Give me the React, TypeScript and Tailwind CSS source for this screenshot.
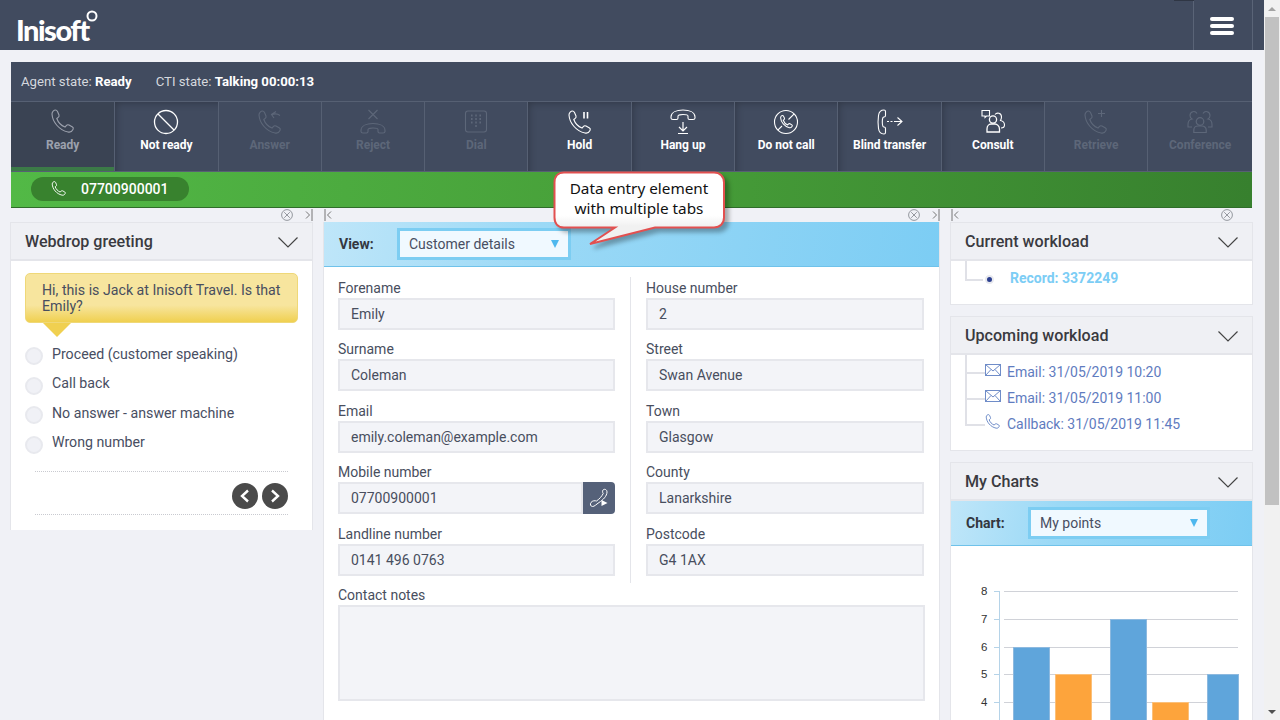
import type { ReactNode } from "react";

const Handset = () => (
  <path d="M2 5C2 2.5 4 1 5.5 1 6.5 1 7 1.5 7.5 2.5L9 6C9.3 7 9 7.8 8.2 8.4L6.8 9.5C8 13 11 16.5 15 18L16.5 16.3C17.2 15.6 18 15.5 19 16L22.5 18C23.3 18.5 23.5 19.5 23 20.5 22 22.5 20 23.5 18 23 9 21 2.5 13 2 5Z" />
);

const HungUp = () => (
  <path d="M1 8C1 3 7 1 13 1 19 1 25 3 25 8V9C25 10 24 10.5 23 10.5H19.5C18.5 10.5 18 10 18 9V7C18 6 15 5.5 13 5.5 11 5.5 8 6 8 7V9C8 10 7.5 10.5 6.5 10.5H3C2 10.5 1 10 1 9Z" />
);

const Person = ({ x = 0, y = 0 }: { x?: number; y?: number }) => (
  <g transform={`translate(${x} ${y})`}>
    <circle cx="7" cy="4.5" r="3.8" />
    <path d="M.8 15.5V13C.8 10.5 3 9 5 9H9C11 9 13.2 10.5 13.2 13V15.5Z" />
  </g>
);

const Icon = ({ children }: { children: ReactNode }) => (
  <svg viewBox="0 0 26 26" fill="none" stroke="currentColor" strokeWidth="1.1" className="w-[26px] h-[26px]">
    {children}
  </svg>
);

const buttons: { label: string; tone: "selected" | "on" | "off"; icon: ReactNode }[] = [
  { label: "Ready", tone: "selected", icon: <Handset /> },
  {
    label: "Not ready",
    tone: "on",
    icon: (
      <>
        <circle cx="13" cy="13" r="11.5" strokeWidth="1.3" />
        <path d="M5 5L21 21" strokeWidth="1.3" />
      </>
    ),
  },
  {
    label: "Answer",
    tone: "off",
    icon: (
      <>
        <g transform="translate(0 1)">
          <Handset />
        </g>
        <path d="M19 2.5L14.5 5.5 17 9M15 5.5C18 4.5 21 5 23 6.5" />
      </>
    ),
  },
  {
    label: "Reject",
    tone: "off",
    icon: (
      <>
        <path d="M8.5 1L17.5 10M17.5 1L8.5 10" />
        <g transform="translate(0 13.5)">
          <HungUp />
        </g>
      </>
    ),
  },
  {
    label: "Dial",
    tone: "off",
    icon: (
      <>
        <rect x="2.5" y="2" width="21" height="21" rx="2.5" />
        <path
          d="M8 6.5h1.6M12.2 6.5h1.6M16.4 6.5h1.6M8 10h1.6M12.2 10h1.6M16.4 10h1.6M8 13.5h1.6M12.2 13.5h1.6M16.4 13.5h1.6M12.2 17h1.6"
          strokeWidth="1.8"
        />
      </>
    ),
  },
  {
    label: "Hold",
    tone: "on",
    icon: (
      <>
        <g transform="translate(0 1)">
          <Handset />
        </g>
        <path d="M17 3V9.5M20.5 3V9.5" strokeWidth="1.6" />
      </>
    ),
  },
  {
    label: "Hang up",
    tone: "on",
    icon: (
      <>
        <HungUp />
        <path d="M13 13V22M9 18L13 22 17 18M8 24.5H18" strokeWidth="1.2" />
      </>
    ),
  },
  {
    label: "Do not call",
    tone: "on",
    icon: (
      <>
        <circle cx="13" cy="13" r="11.5" />
        <path d="M4.8 21.2L9 17M15.5 10.5L21.2 4.8" />
        <g transform="translate(6.5 6) scale(.55)" strokeWidth="1.9">
          <Handset />
        </g>
      </>
    ),
  },
  {
    label: "Blind transfer",
    tone: "on",
    icon: (
      <>
        <path d="M7 1C4 1 2 3 1.5 6.5 1 10 1 16 1.5 19.5 2 23 4 25 7 25 8 25 8.5 24.5 8.5 23.5V19.5C8.5 18.5 8 18 7 18 6 18 5.3 17 5.3 13 5.3 9 6 8 7 8 8 8 8.5 7.5 8.5 6.5V2.5C8.5 1.5 8 1 7 1Z" />
        <path d="M10 12.5H12M13.5 12.5H15.5M17 12.5H25M20.5 8.5L25 12.5 20.5 16.5" />
      </>
    ),
  },
  {
    label: "Consult",
    tone: "on",
    icon: (
      <>
        <path d="M2 1.5H9.5V7H6.5L5 8.5V7H2Z" />
        <path d="M15 5.5C17 3 21.5 4 21.5 8 21.5 9.5 21 10.5 20.5 11.5 23 12 24.5 14 24.5 16 24.5 18 23 19 21 19" />
        <circle cx="13" cy="10.5" r="3.6" strokeWidth="1.3" />
        <path d="M7 23V20C7 17 9 15 11 15H15C17 15 19.5 17 19.5 20V23Z" strokeWidth="1.3" />
      </>
    ),
  },
  {
    label: "Retrieve",
    tone: "off",
    icon: (
      <>
        <g transform="translate(0 1)">
          <Handset />
        </g>
        <path d="M18.5 1V8M15 4.5H22" />
      </>
    ),
  },
  {
    label: "Conference",
    tone: "off",
    icon: (
      <>
        <path d="M10 4.5C8 1 3 2.5 3 6.5 3 8 4 9.5 5 10 2.5 10.5 1 13 1 15.5V18H5" />
        <path d="M16 4.5C18 1 23 2.5 23 6.5 23 8 22 9.5 21 10 23.5 10.5 25 13 25 15.5V18H21" />
        <g strokeWidth="1.2">
          <Person x={6} y={8} />
        </g>
      </>
    ),
  },
];

const toneClass = {
  selected: "bg-[#3a4353] text-[#9ca1ad] border-b-4 border-b-[#3b7a47]",
  on: "text-white bg-[#414b5f] shadow-[inset_6px_6px_8px_-6px_rgba(0,0,0,0.3)]",
  off: "text-[#5d6779] bg-[#414b5f]",
};

const Chevron = () => (
  <svg viewBox="0 0 20 11" fill="none" stroke="#444" strokeWidth="1.2" className="w-5 h-[11px]">
    <path d="M.5 .5L10 10 19.5 .5" />
  </svg>
);

const CloseDot = () => (
  <svg viewBox="0 0 12 12" fill="none" stroke="#8a8d94" strokeWidth=".9" className="w-3 h-3">
    <circle cx="6" cy="6" r="5.4" />
    <path d="M3.2 3.2L8.8 8.8M8.8 3.2L3.2 8.8" />
  </svg>
);

const CollapseRight = () => (
  <svg viewBox="0 0 8 12" fill="none" stroke="#666" strokeWidth=".9" className="w-2 h-3">
    <path d="M1 2.5L4.5 6 1 9.5M7 0V12" />
  </svg>
);

const CollapseLeft = () => (
  <svg viewBox="0 0 8 12" fill="none" stroke="#666" strokeWidth=".9" className="w-2 h-3">
    <path d="M7 2.5L3.5 6 7 9.5M1 0V12" />
  </svg>
);

const PanelHeader = ({ title }: { title: string }) => (
  <div className="h-[38px] bg-[#eff0f4] border-b-2 border-b-[#e4e5ea] flex items-center justify-between pl-[14px] pr-[14px] pt-[2px]">
    <span className="text-[16.1px] font-medium text-[#3a3a40]">{title}</span>
    <Chevron />
  </div>
);

const Field = ({ label, value, action }: { label: string; value: string; action?: boolean }) => (
  <div className="mb-[9.4px]">
    <div className="h-[20px] text-[14px] leading-[20px] text-[#484e5e]">{label}</div>
    <div className="flex h-[32px]">
      <div className="flex-1 bg-[#f3f4f8] border-2 border-[#e6e7ec] pl-[11px] text-[14px] leading-[28px] text-[#484e5e]">
        {value}
      </div>
      {action && (
        <div className="w-[32px] bg-[#556179] rounded-r-[4px] flex items-center justify-center">
          <svg viewBox="0 0 20 20" fill="none" stroke="#fff" strokeWidth="1" className="w-5 h-5">
            <path d="M14 2C15.5 .5 18 1.5 18 4 18 8 14 12 10 14.5 7 16.5 5.5 18.5 3.5 18.5 1.5 18.5 .8 16 2 14.5 3.5 12.5 6 12.5 7.5 13 10.5 11 13 8 14.2 5.5 13.5 4.5 13.3 3 14 2Z" />
            <path d="M12.5 12L18.5 15 12.5 18Z" fill="#fff" stroke="none" />
          </svg>
        </div>
      )}
    </div>
  </div>
);

const Option = ({ label }: { label: string }) => (
  <div className="flex items-center h-[18px] mb-[11.5px]">
    <span className="w-[18px] h-[18px] rounded-full bg-[#f0f1f6] border-2 border-[#e8e9ee] mr-[9px]" />
    <span className="text-[14.2px] text-[#484e62] -mt-[3px]">{label}</span>
  </div>
);

const Select = ({ value, width }: { value: string; width: string }) => (
  <div className={`${width} h-[32px] bg-[#f0f9ff] border-[3px] border-[#7ccdf2] flex items-center justify-between pl-[9px] pr-[9px]`}>
    <span className="text-[14px] text-[#484e62]">{value}</span>
    <span className="w-0 h-0 border-l-[4.5px] border-r-[4.5px] border-t-[8px] border-l-transparent border-r-transparent border-t-[#4fb8ee]" />
  </div>
);

const TreeRow = ({ last, children }: { last?: boolean; children: ReactNode }) => (
  <div className="flex h-[26px]">
    <div className="w-[20px] flex flex-col">
      <div className="h-[19px] border-l-2 border-b-2 border-[#e0e1e7]" />
      {!last && <div className="flex-1 border-l-2 border-[#e0e1e7]" />}
    </div>
    <div className="flex items-center text-[14px] text-[#5f7cc0] pt-[8px] h-[26px]">{children}</div>
  </div>
);

const MailIcon = () => (
  <svg viewBox="0 0 16 13" fill="none" stroke="#6f8cc8" strokeWidth="1" className="w-4 h-[13px] mr-[6px] -mt-[4px]">
    <rect x=".5" y=".5" width="15" height="11" />
    <path d="M.5 .5L8 7 15.5 .5M.5 11.5L6 5.5M15.5 11.5L10 5.5" />
  </svg>
);

const blueBar = "bg-[linear-gradient(100deg,#bfe6f9_0%,#9bd9f6_35%,#7ccdf4_100%)] border-b border-b-[#6fc2ea]";

const Chart = () => {
  const ticks = [
    { label: "8", y: 45.5 },
    { label: "7", y: 73.5 },
    { label: "6", y: 101.5 },
    { label: "5", y: 128.5 },
    { label: "4", y: 156.5 },
  ];
  const bars = [
    { x: 62.5, y: 101.5, w: 36, fill: "#5fa5db", edge: "#8db9df" },
    { x: 104.5, y: 128.5, w: 36, fill: "#fda43c", edge: "#fbc07a" },
    { x: 159.5, y: 73.5, w: 36, fill: "#5fa5db", edge: "#8db9df" },
    { x: 201.5, y: 156.5, w: 36, fill: "#fda43c", edge: "#fbc07a" },
    { x: 256.5, y: 128.5, w: 31, fill: "#5fa5db", edge: "#8db9df" },
  ];
  return (
    <svg viewBox="0 0 301 174" className="w-[301px] h-[174px] block">
      <path d="M48.5 45V174" stroke="#b5d3e8" strokeWidth="1" />
      {ticks.map((t) => (
        <g key={t.label}>
          <path d={`M43 ${t.y}H48.5`} stroke="#b5d3e8" strokeWidth="1" />
          <path d={`M53 ${t.y}H287`} stroke="#d0d2d8" strokeWidth="1" />
          <text x="36.5" y={t.y + 3.5} fontSize="11.5" textAnchor="end" fill="#333" fontFamily="Liberation Sans, sans-serif">
            {t.label}
          </text>
        </g>
      ))}
      {bars.map((b) => (
        <rect key={b.x} x={b.x} y={b.y} width={b.w} height={176 - b.y} fill={b.fill} stroke={b.edge} strokeWidth="1" />
      ))}
    </svg>
  );
};

const App = () => {
  return (
    <div className="relative w-[1280px] h-[720px] overflow-hidden flex bg-[#f0f1f6] font-[Roboto,sans-serif]">
      <div className="w-[1264px] h-[720px] overflow-hidden">
        {/* Top bar */}
        <header className="h-[50px] bg-[#414b5f] flex justify-between pr-[11px]">
          <div className="relative pl-[16px] pt-[12px] text-white font-[Lato,sans-serif] font-black text-[29px] leading-[36px] tracking-[-1.5px]">
            Inisoft
            <svg viewBox="0 0 12 12" fill="none" stroke="#fff" strokeWidth="2" className="absolute left-[86px] top-[10px] w-3 h-3">
              <circle cx="6" cy="6" r="4.5" />
            </svg>
          </div>
          <div className="relative w-[60px] border-x border-[#5a6477] flex flex-col items-center gap-[3px] pt-[17px] pr-[2px]">
            <span className="absolute -left-[20px] top-0 w-[20px] h-[1px] bg-[#2f3644]" />
            <span className="w-[24px] h-[4px] rounded-full bg-white" />
            <span className="w-[24px] h-[4px] rounded-full bg-white" />
            <span className="w-[24px] h-[4px] rounded-full bg-white" />
          </div>
        </header>

        <div className="pt-[12px] pl-[11px] pr-[12px]">
          {/* Agent toolbar */}
          <section className="bg-[#414b5f]">
            <div className="h-[39px] flex items-center pl-[10px] pt-[1px] gap-[24px] text-[13.2px] text-[#d5d8de]">
              <span>
                Agent state: <b className="text-white font-bold">Ready</b>
              </span>
              <span>
                CTI state: <b className="text-white font-bold">Talking 00:00:13</b>
              </span>
            </div>
            <div className="grid grid-cols-[repeat(11,103.3px)_1fr] h-[71px] border-y border-y-[#566073]">
              {buttons.map((b) => (
                <div
                  key={b.label}
                  className={`flex flex-col items-center pt-[7px] border-l border-l-[#566073] first:border-l-0 ${toneClass[b.tone]}`}
                >
                  <Icon>{b.icon}</Icon>
                  <span className="text-[12px] font-bold leading-[20px]">{b.label}</span>
                </div>
              ))}
            </div>
            <div className="h-[36px] bg-[linear-gradient(90deg,#52b946_0%,#479f39_50%,#37802e_100%)] border-b border-b-[#2f6d2a] pl-[20px] pt-[5px]">
              <div className="w-[158px] h-[24px] rounded-full bg-[#38822e] flex items-center pl-[20px] gap-[14px] text-white">
                <svg viewBox="0 0 26 26" fill="none" stroke="currentColor" strokeWidth="1.5" className="w-4 h-4">
                  <Handset />
                </svg>
                <span className="text-[14px] font-medium">07700900001</span>
              </div>
            </div>
          </section>

          {/* Three columns */}
          <div className="flex -ml-[1px]">
            <div className="w-[303px] shrink-0">
              <div className="h-[14px] flex items-center justify-end gap-[12px]">
                <CloseDot />
                <CollapseRight />
              </div>
              <div className="bg-white border-x border-t border-[#e4e5ea]">
                <PanelHeader title="Webdrop greeting" />
                <div className="h-[269px] px-[14px] pt-[12px]">
                  <div className="relative h-[50px] w-[273px] rounded-[5px] border border-[#efd878] bg-[linear-gradient(180deg,#f7e59e_0%,#f7e59e_65%,#f0d050_100%)] pl-[16px] pt-[8px] text-[14.2px] leading-[16px] text-[#484e5e]">
                    Hi, this is Jack at Inisoft Travel. Is that Emily?
                    <span className="absolute left-[17px] top-[49px] w-0 h-0 border-l-[14px] border-r-[14px] border-t-[14px] border-l-transparent border-r-transparent border-t-[#f0d050]" />
                  </div>
                  <div className="mt-[24px]">
                    <Option label="Proceed (customer speaking)" />
                    <Option label="Call back" />
                    <Option label="No answer - answer machine" />
                    <Option label="Wrong number" />
                  </div>
                  <div className="ml-[10px] w-[253px] mt-[17px] h-[44px] border-y border-dotted border-[#c9cad0] flex items-start justify-end gap-[4px] pt-[11px]">
                    <span className="w-[26px] h-[26px] rounded-full bg-[#4a4a4a] flex items-center justify-center">
                      <svg viewBox="0 0 12 14" fill="none" stroke="#fff" strokeWidth="2.4" className="w-3 h-[14px]">
                        <path d="M9 1.5L3 7 9 12.5" />
                      </svg>
                    </span>
                    <span className="w-[26px] h-[26px] rounded-full bg-[#4a4a4a] flex items-center justify-center">
                      <svg viewBox="0 0 12 14" fill="none" stroke="#fff" strokeWidth="2.4" className="w-3 h-[14px]">
                        <path d="M3 1.5L9 7 3 12.5" />
                      </svg>
                    </span>
                  </div>
                </div>
              </div>
            </div>

            {/* Centre panel */}
            <div className="ml-[10px] w-[627px] shrink-0">
              <div className="h-[14px] w-[617px] flex items-center justify-between pl-[1px]">
                <CollapseLeft />
                <div className="flex items-center gap-[12px]">
                  <CloseDot />
                  <CollapseRight />
                </div>
              </div>
              <div className="w-[617px] h-[498px] bg-white border-x border-[#e4e5ea]">
                <div className={`h-[45px] ${blueBar} flex items-center pl-[15px]`}>
                  <span className="w-[58px] text-[14px] font-bold text-[#33373f]">View:</span>
                  <Select value="Customer details" width="w-[174px]" />
                </div>
                <div className="px-[14px] pt-[11px]">
                  <div className="flex">
                    <div className="w-[277px]">
                      <Field label="Forename" value="Emily" />
                      <Field label="Surname" value="Coleman" />
                      <Field label="Email" value="emily.coleman@example.com" />
                      <Field label="Mobile number" value="07700900001" action />
                      <Field label="Landline number" value="0141 496 0763" />
                    </div>
                    <div className="w-[1px] h-[306px] -mt-[1px] ml-[15px] mr-[15px] bg-[#e4e5ea]" />
                    <div className="w-[278px]">
                      <Field label="House number" value="2" />
                      <Field label="Street" value="Swan Avenue" />
                      <Field label="Town" value="Glasgow" />
                      <Field label="County" value="Lanarkshire" />
                      <Field label="Postcode" value="G4 1AX" />
                    </div>
                  </div>
                  <div className="h-[21px] text-[14px] leading-[21px] text-[#484e5e]">Contact notes</div>
                  <div className="w-[587px] h-[96px] -mt-[1px] bg-[#f3f4f8] border-2 border-[#e6e7ec]" />
                </div>
              </div>
            </div>

            {/* Right column */}
            <div className="w-[303px] shrink-0">
              <div className="h-[14px] flex items-center justify-between pl-[1px] pr-[20px]">
                <CollapseLeft />
                <CloseDot />
              </div>
              <div className="bg-white border border-[#e4e5ea] h-[83px]">
                <PanelHeader title="Current workload" />
                <div className="flex pl-[14px]">
                  <div className="w-[18px] h-[20px] border-l-2 border-b-2 border-[#e0e1e7]" />
                  <div className="ml-[2px] mt-[14px] w-[9px] h-[9px] rounded-full bg-[#2b3f8f] border-2 border-[#e8e9ee]" />
                  <span className="ml-[16px] mt-[7px] text-[14px] font-bold text-[#7ccdf5]">Record: 3372249</span>
                </div>
              </div>
              <div className="mt-[11px] bg-white border border-[#e4e5ea] h-[135px]">
                <PanelHeader title="Upcoming workload" />
                <div className="pl-[14px]">
                  <TreeRow>
                    <MailIcon />
                    Email: 31/05/2019 10:20
                  </TreeRow>
                  <TreeRow>
                    <MailIcon />
                    Email: 31/05/2019 11:00
                  </TreeRow>
                  <TreeRow last>
                    <svg viewBox="0 0 26 26" fill="none" stroke="#6f8cc8" strokeWidth="1.6" className="w-4 h-4 mr-[6px] -mt-[4px]">
                      <Handset />
                    </svg>
                    Callback: 31/05/2019 11:45
                  </TreeRow>
                </div>
              </div>
              <div className="mt-[11px] bg-white border-x border-t border-[#e4e5ea]">
                <PanelHeader title="My Charts" />
                <div className={`h-[45px] ${blueBar} flex items-center pl-[15px]`}>
                  <span className="w-[62px] text-[14px] font-bold text-[#33373f]">Chart:</span>
                  <Select value="My points" width="w-[182px]" />
                </div>
                <Chart />
              </div>
            </div>
          </div>
        </div>
      </div>

      {/* Browser scrollbar */}
      <div className="w-4 h-[720px] bg-[#f1f1f1] flex flex-col items-center">
        <div className="h-[17px] flex items-center justify-center">
          <span className="w-0 h-0 border-l-[4px] border-r-[4px] border-b-[4px] border-l-transparent border-r-transparent border-b-[#a3a3a3]" />
        </div>
        <div className="w-[14px] h-[488px] bg-[#c1c1c1]" />
        <div className="mt-auto h-[17px] flex items-center justify-center">
          <span className="w-0 h-0 border-l-[4px] border-r-[4px] border-t-[4px] border-l-transparent border-r-transparent border-t-[#505050]" />
        </div>
      </div>

      {/* Callout */}
      <div className="absolute left-[553px] top-[171px] w-[174px] h-[76px]">
        <svg viewBox="0 0 174 76" className="absolute inset-0 w-[174px] h-[76px] drop-shadow-[4px_4px_2px_rgba(0,0,0,0.3)]">
          <defs>
            <linearGradient id="callout" x1="0" y1="0" x2="0" y2="1">
              <stop offset="0" stopColor="#ffffff" />
              <stop offset="0.6" stopColor="#ffffff" />
              <stop offset="0.75" stopColor="#f1f1f1" />
            </linearGradient>
          </defs>
          <path
            d="M11 1.5H161C167 1.5 171 5.5 171 11.5V46.5C171 52.5 167 56.5 161 56.5H102L37 73 62 56.5H11C5 56.5 1.5 52.5 1.5 46.5V11.5C1.5 5.5 5 1.5 11 1.5Z"
            fill="url(#callout)"
            stroke="#e25050"
            strokeWidth="2"
          />
        </svg>
        <div className="relative w-[172px] pt-[8px] text-center text-[15.3px] leading-[19.5px] text-[#111] font-['Noto_Sans',sans-serif]">
          Data entry element
          <br />
          with multiple tabs
        </div>
      </div>
    </div>
  );
};

export default App;
